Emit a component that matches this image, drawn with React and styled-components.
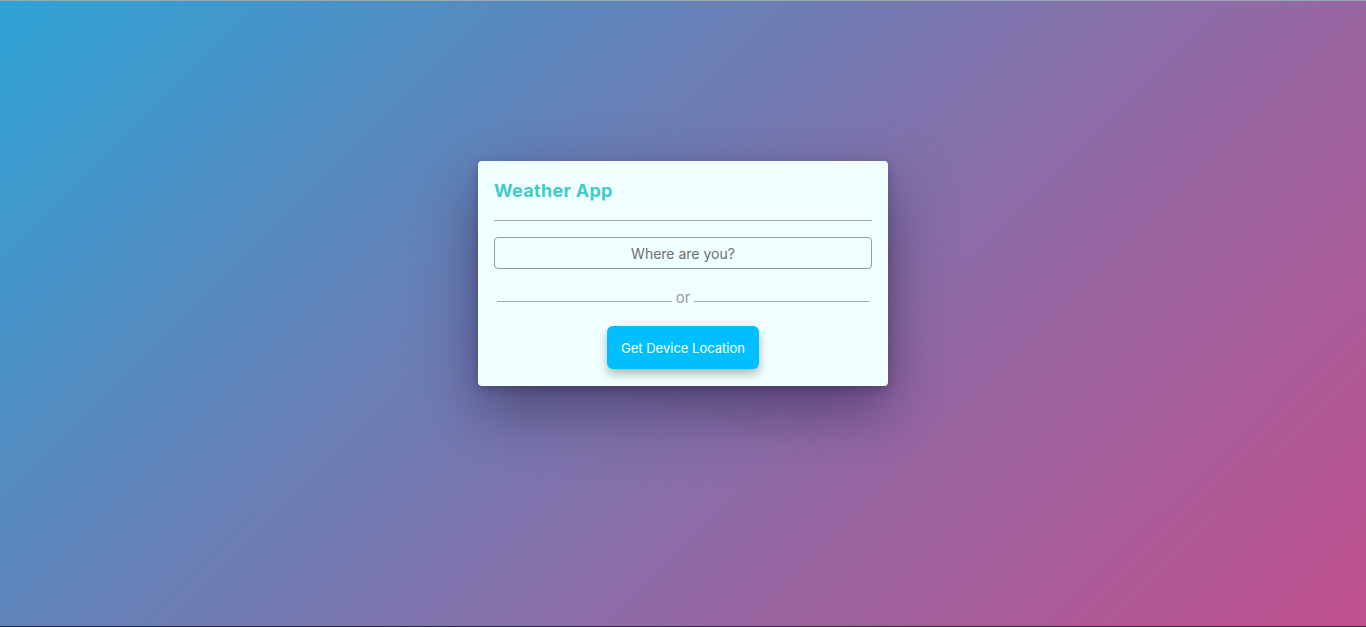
import React from 'react';
import styled, { createGlobalStyle } from 'styled-components';

const GlobalStyle = createGlobalStyle`
  html, body {
    margin: 0;
    padding: 0;
    height: 100%;
  }
  body {
    font-family: Inter, "Noto Sans", sans-serif;
  }
  #root {
    height: 100%;
  }
`;

const Page = styled.div`
  height: 100vh;
  display: flex;
  align-items: center;
  justify-content: center;
  background: linear-gradient(135deg, #2ea3d5 0%, #6a7fb6 38%, #9866a2 68%, #c0508e 100%);
  border-top: 1px solid #9aa9ad;
  border-bottom: 1px solid #2a2a3a;
  box-sizing: border-box;
`;

const Card = styled.div`
  width: 410px;
  box-sizing: border-box;
  margin-top: -80px;
  padding: 16px 16px 17px;
  background: #f0ffff;
  border-radius: 4px;
  box-shadow: 0 25px 60px rgba(40, 30, 70, 0.55), 0 4px 10px rgba(40, 30, 70, 0.3);
`;

const Title = styled.h1`
  margin: 0;
  padding-top: 2px;
  font-size: 18px;
  font-weight: 700;
  color: #40cbc8;
  line-height: 24px;
  letter-spacing: 0.3px;
`;

const Rule = styled.hr`
  margin: 17px 0 16px;
  border: none;
  border-top: 1px solid #a7a7a7;
`;

const SearchInput = styled.input`
  display: block;
  width: 100%;
  box-sizing: border-box;
  height: 32px;
  border: 1px solid #9a9a9a;
  border-radius: 4px;
  background: transparent;
  text-align: center;
  font-family: inherit;
  font-size: 14px;
  color: #555;
  &::placeholder {
    color: #6e6e6e;
  }
`;

const Divider = styled.div`
  display: flex;
  align-items: center;
  gap: 4px;
  margin: 20px 3px 0;
  color: #9a9a9a;
  font-size: 15px;
  line-height: 18px;
  &::before, &::after {
    content: '';
    flex: 1;
    border-top: 1px solid #a7a7a7;
    margin-top: 6px;
  }
`;

const Actions = styled.div`
  display: flex;
  justify-content: center;
  margin-top: 19px;
`;

const LocateButton = styled.button`
  width: 152px;
  height: 43px;
  border: none;
  border-radius: 6px;
  background: #00bfff;
  color: #fff;
  font-family: inherit;
  font-size: 13px;
  cursor: pointer;
  box-shadow: 0 5px 10px rgba(0, 0, 0, 0.28);
`;

export default function App() {
  return (
    <>
      <GlobalStyle />
      <Page>
        <Card>
          <Title>Weather App</Title>
          <Rule />
          <SearchInput placeholder="Where are you?" />
          <Divider>or</Divider>
          <Actions>
            <LocateButton>Get Device Location</LocateButton>
          </Actions>
        </Card>
      </Page>
    </>
  );
}
